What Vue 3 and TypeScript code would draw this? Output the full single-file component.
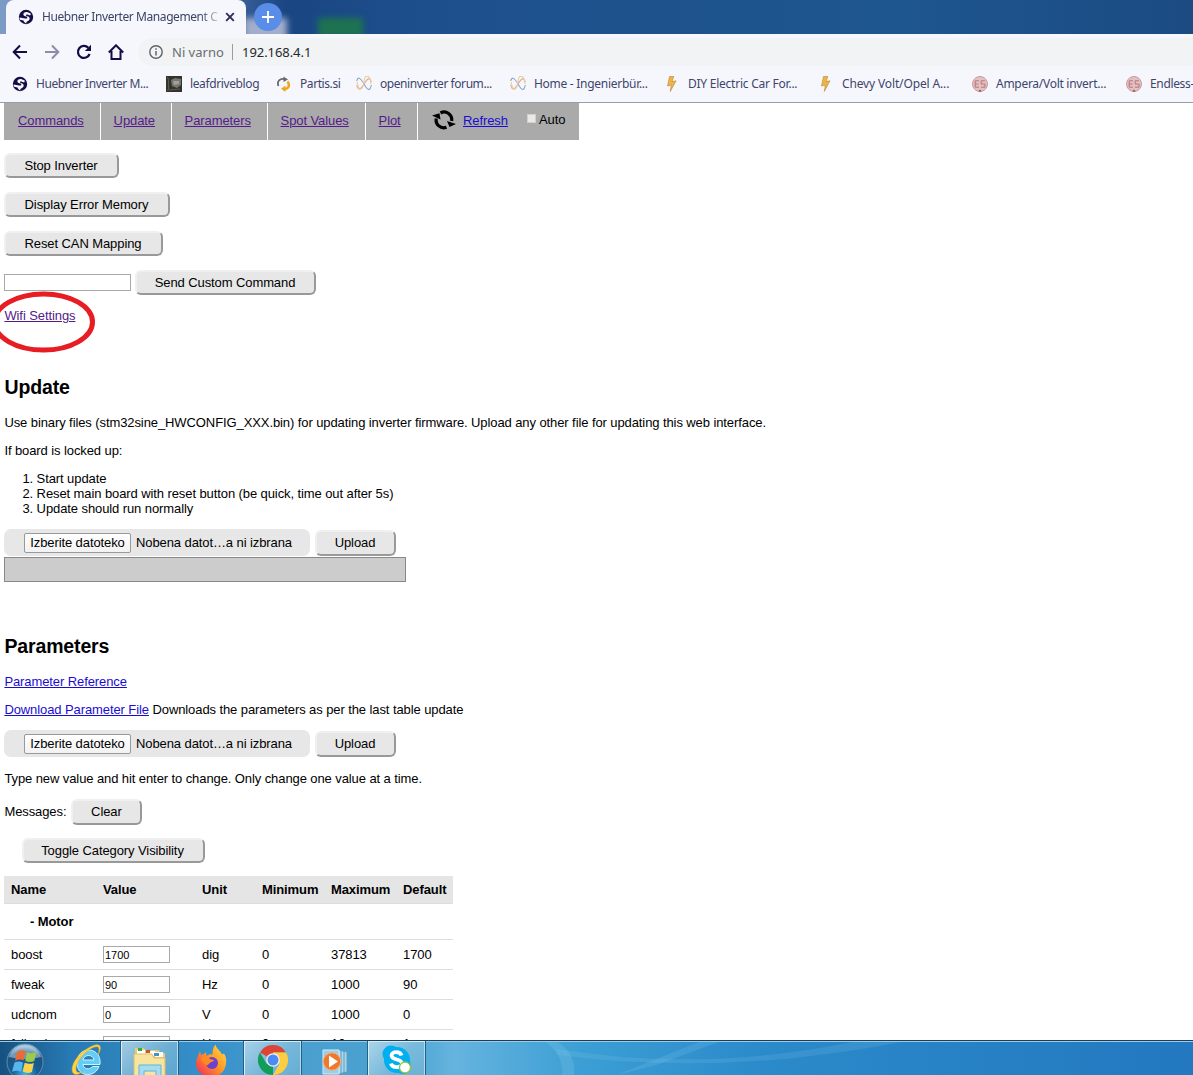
<script setup lang="ts">
interface Bookmark { label: string; icon: string; width: number; spacing: number }
interface Row { name: string; value: string; unit: string; min: string; max: string; def: string }

const bookmarks: Bookmark[] = [
  { label: 'Huebner Inverter M...', icon: 'globe', width: 154, spacing: -0.45 },
  { label: 'leafdriveblog', icon: 'photo', width: 110, spacing: -0.38 },
  { label: 'Partis.si', icon: 'partis', width: 80, spacing: -0.42 },
  { label: 'openinverter forum...', icon: 'wave', width: 154, spacing: -0.44 },
  { label: 'Home - Ingenierbür...', icon: 'wave', width: 154, spacing: -0.28 },
  { label: 'DIY Electric Car For...', icon: 'bolt', width: 154, spacing: -0.24 },
  { label: 'Chevy Volt/Opel A...', icon: 'bolt', width: 154, spacing: -0.14 },
  { label: 'Ampera/Volt invert...', icon: 'es', width: 154, spacing: -0.28 },
  { label: 'Endless-', icon: 'es', width: 154, spacing: -0.35 },
]

const tabs = [
  { label: 'Commands', width: 96 },
  { label: 'Update', width: 70 },
  { label: 'Parameters', width: 95 },
  { label: 'Spot Values', width: 97 },
  { label: 'Plot', width: 51 },
]

const commands = [
  { label: 'Stop Inverter', width: 115 },
  { label: 'Display Error Memory', width: 166 },
  { label: 'Reset CAN Mapping', width: 159 },
]

const rows: Row[] = [
  { name: 'boost', value: '1700', unit: 'dig', min: '0', max: '37813', def: '1700' },
  { name: 'fweak', value: '90', unit: 'Hz', min: '0', max: '1000', def: '90' },
  { name: 'udcnom', value: '0', unit: 'V', min: '0', max: '1000', def: '0' },
  { name: 'fslipmin', value: '1', unit: 'Hz', min: '0', max: '10', def: '1' },
]
</script>

<template>
  <div class="screen">
    <header class="browser">
      <div class="titlebar">
        <div class="tab">
          <svg class="fav" viewBox="0 0 16 16"><circle cx="8" cy="8" r="7.2" fill="#150c46" /><path d="M13 4.800L9.800 3.200C7 2.600 5 4 5.400 5.800c.4 1.600 3.500 1.300 3.900 2.600.3 1.200-1.200 1.300-2.200 1.100L1.500 8.600c0 .8.200 1.400.5 2.100l3.500.7c.5 1.400 1.300 2.500 3 3.100-.6-1.600.3-2 1.500-2.500 1.600-.7 2.200-2.600 1.200-3.800C10.200 7.100 8 7.300 7.900 6.300c-.1-.8 1.200-.9 2.200-.6l2 .7z" fill="#f6f7fc" /></svg>
          <span class="tab-title">Huebner Inverter Management C</span>
          <svg class="close" viewBox="0 0 10 10"><path d="M1.200 1.200l7.600 7.600M8.800 1.200L1.200 8.800" stroke="#2c2d5c" stroke-width="1.900" /></svg>
        </div>
        <div class="plus"><svg viewBox="0 0 12 12"><path d="M6 0v12M0 6h12" stroke="#fff" stroke-width="1.800" /></svg></div>
        <i class="smudge pale"></i><i class="smudge green"></i>
      </div>
      <div class="toolbar">
        <svg class="tool" viewBox="0 0 16 16"><path d="M15 8H2M8 1.500L1.700 8 8 14.500" fill="none" stroke="#150c46" stroke-width="2" /></svg>
        <svg class="tool" viewBox="0 0 16 16"><path d="M1 8h13M8 1.500L14.300 8 8 14.500" fill="none" stroke="#8f8ba8" stroke-width="2" /></svg>
        <svg class="tool" viewBox="0 0 16 16"><path d="M13.600 10A6 6 0 1 1 12.300 3.800" fill="none" stroke="#150c46" stroke-width="2.200" /><path d="M15 .8V7H8.800z" fill="#150c46" /></svg>
        <svg class="tool" viewBox="0 0 16 16"><path d="M.8 8.500L8 1.300l7.200 7.200M3.500 7v8h9V7" fill="none" stroke="#150c46" stroke-width="2" /></svg>
        <div class="address">
          <svg viewBox="0 0 14 14"><circle cx="7" cy="7" r="6.200" fill="none" stroke="#5f6368" stroke-width="1.400" /><path d="M7 6v4.500M7 3.300v1.500" stroke="#5f6368" stroke-width="1.500" /></svg>
          <span class="unsafe">Ni varno</span><i></i><span class="url">192.168.4.1</span>
        </div>
      </div>
      <nav class="bookmarks">
        <div v-for="b in bookmarks" :key="b.label" class="bookmark" :style="{ width: b.width + 'px' }">
          <svg v-if="b.icon === 'globe'" viewBox="0 0 16 16"><circle cx="8" cy="8" r="7.2" fill="#150c46" /><path d="M13 4.800L9.800 3.200C7 2.600 5 4 5.400 5.800c.4 1.600 3.500 1.300 3.900 2.600.3 1.200-1.200 1.300-2.200 1.100L1.500 8.600c0 .8.200 1.400.5 2.100l3.500.7c.5 1.400 1.300 2.500 3 3.100-.6-1.600.3-2 1.500-2.500 1.600-.7 2.200-2.600 1.200-3.800C10.200 7.100 8 7.300 7.900 6.300c-.1-.8 1.200-.9 2.200-.6l2 .7z" fill="#f6f7fc" /></svg>
          <svg v-else-if="b.icon === 'photo'" viewBox="0 0 16 16"><path d="M0 0h16v16H0z" fill="#33322f" /><path d="M5 4l4-2 6 1v6l-4 3-5-2z" fill="#77776f" /><path d="M7 5h6v3l-5 1z" fill="#a0a19a" /><path d="M1.500 1l1 3v9l-1 2M3 14l11-1" stroke="#605a4a" fill="none" /></svg>
          <svg v-else-if="b.icon === 'partis'" viewBox="0 0 16 16"><path d="M2.500 10C.5 5.500 4 2 8.500 3" fill="none" stroke="#666b70" stroke-width="1.800" /><path d="M7.500 .5L12 3.500l-4.500 2.500z" fill="#666b70" /><path d="M11.500 5.500c3 4 1 7.500-3.500 7.500" fill="none" stroke="#eda51e" stroke-width="2.400" /><path d="M9.500 9.500V16L5 12.800z" fill="#eda51e" /></svg>
          <svg v-else-if="b.icon === 'wave'" viewBox="0 0 16 16" fill="none" stroke-width="1.100"><path d="M.7 5C2 0 4.500 2 8 8s6 8 7.300 1" stroke="#8aa6c8" /><path d="M.7 9C2 15 4.500 14 8 8s6-7 7.300-2" stroke="#e0a898" /><path d="M1 6c2 11 6 8 7-.5S14-1 15 8" stroke="#e6cf94" /></svg>
          <svg v-else-if="b.icon === 'bolt'" viewBox="0 0 16 16"><path d="M5.500 .5h4.300L8 5.600l4-.8L6.300 15.500 7.300 9 3.500 10z" fill="#eeb546" stroke="#b88430" stroke-width=".6" /></svg>
          <svg v-else viewBox="0 0 16 16"><circle cx="8" cy="8" r="7.500" fill="#e3c1c3" stroke="#c99a9d" /><path d="M7 4.800H3.200v6.400H7M3.200 8h3.300M13 4.800H9.200V8H13v3.200H9" fill="none" stroke="#b77679" stroke-width="1" /><path d="M6.500 15.500L8 13.500l1.500 2z" fill="#843e44" /></svg>
          <span :style="{ letterSpacing: b.spacing + 'px' }">{{ b.label }}</span>
        </div>
      </nav>
    </header>

    <main class="page">
      <nav class="menu">
        <div v-for="t in tabs" :key="t.label" class="cell" :style="{ width: t.width + 'px' }"><a>{{ t.label }}</a></div>
        <div class="cell refresh">
          <svg viewBox="0 0 24 20"><path d="M4.300 8.500A7.600 7.600 0 0 0 14.500 17.200M8.500 3A7.600 7.600 0 0 1 19.600 11" fill="none" stroke="#000" stroke-width="3.200" /><path d="M0 5.500l7.500-2.300L8.500 9.500zM24 14l-6.500 3-2.500-6z" fill="#000" /></svg>
          <a class="blue">Refresh</a><i class="check"></i><span class="auto">Auto</span>
        </div>
      </nav>

      <section class="commands">
        <div v-for="c in commands" :key="c.label" class="command"><button :style="{ width: c.width + 'px' }">{{ c.label }}</button></div>
        <div class="command custom"><input class="custom-input" /><button class="send">Send Custom Command</button></div>
        <div class="wifi"><a>Wifi Settings</a>
          <svg class="ring" viewBox="0 0 100 62"><ellipse cx="45.500" cy="31" rx="49" ry="28" fill="none" stroke="#e81c23" stroke-width="5" /></svg>
        </div>
      </section>

      <h2>Update</h2>
      <p>Use binary files (stm32sine_HWCONFIG_XXX.bin) for updating inverter firmware. Upload any other file for updating this web interface.</p>
      <p>If board is locked up:</p>
      <ol><li>Start update</li><li>Reset main board with reset button (be quick, time out after 5s)</li><li>Update should run normally</li></ol>
      <div class="upload"><div class="file"><span class="choose">Izberite datoteko</span><span>Nobena datot…a ni izbrana</span></div><button>Upload</button></div>
      <div class="progress"></div>

      <h2 class="params">Parameters</h2>
      <p><a class="blue">Parameter Reference</a></p>
      <p><a class="blue">Download Parameter File</a> Downloads the parameters as per the last table update</p>
      <div class="upload"><div class="file"><span class="choose">Izberite datoteko</span><span>Nobena datot…a ni izbrana</span></div><button>Upload</button></div>
      <p class="hint">Type new value and hit enter to change. Only change one value at a time.</p>
      <div class="messages"><span>Messages:</span><button>Clear</button></div>
      <button class="toggle">Toggle Category Visibility</button>
      <div class="table">
        <div class="tr head"><b>Name</b><b>Value</b><b>Unit</b><b>Minimum</b><b>Maximum</b><b>Default</b></div>
        <div class="category">- Motor</div>
        <div v-for="r in rows" :key="r.name" class="tr">
          <span>{{ r.name }}</span><span><input :value="r.value" /></span><span>{{ r.unit }}</span><span>{{ r.min }}</span><span>{{ r.max }}</span><span>{{ r.def }}</span>
        </div>
      </div>
    </main>

    <footer class="taskbar">
      <div class="task start">
        <svg width="38" height="36" viewBox="0 0 38 36"><defs><radialGradient id="orb" cx=".5" cy=".85" r=".8"><stop offset="0" stop-color="#39b8e8" /><stop offset=".45" stop-color="#155c94" /><stop offset=".8" stop-color="#20527e" /><stop offset="1" stop-color="#9fc4dc" /></radialGradient></defs><circle cx="19" cy="20" r="18" fill="url(#orb)" stroke="#5d8fb2" /><path d="M3 15a17 17 0 0 1 32 0q-16 4-32 0" fill="#d8ebf5" opacity=".45" /><path d="M11.500 9.500q4-2.500 8 0l-2 9q-4-2-8.500.500z" fill="#ef6a32" /><path d="M21 10.200q4 2 9.500-.2l-2.200 9q-4.500 2-9 0z" fill="#9bcb4b" /><path d="M8.500 20.500q4.500-2 8.500.2l-2 9q-4-2-9 0z" fill="#59b5ed" /><path d="M18.700 20.800q4.500 2 9.200.2l-2 9q-4.500 2-9.200-.5z" fill="#fbd34b" /></svg>
      </div>
      <div class="task ie">
        <svg width="36" height="36" viewBox="0 0 36 36"><path d="M31 23.500H14c.3 4.500 6.500 6 9.500 2H30c-2 5.500-6.500 8-11.500 8C11.500 33.500 8 28 8 22 8 14 13 9 19.500 9 27.500 9 32 15.500 31 23.500zM14 19h11c-.5-6-10-6-11 0z" fill="#62cdf5" stroke="#d1f1fc" stroke-width="1" /><path d="M29 14C34 5 31 1 22 5.500 10 11.500 1 23.500 3.500 31c1.500 4 7 2.500 10.500-.5-4.500 2-7.500 1-7-3.500C8 17 23.500 3.500 29 6c1.500.7 1.200 4 0 8z" fill="#ffd33f" stroke="#e9a92c" stroke-width=".5" /></svg>
      </div>
      <div class="task active explorer">
        <svg width="34" height="35" viewBox="0 0 34 35"><path d="M2 5h9l2 3h5V7h8l1 3h5v25H2z" fill="#e8cb72" /><path d="M4 7h8v5H4zM13 8h9v5h-9zM22 9h8v5h-8z" fill="#fff" /><path d="M5 5h4v3H5z" fill="#33a952" /><path d="M13 7h4v3h-4z" fill="#d65030" /><path d="M21 10h5v3h-5z" fill="#3c95cf" /><path d="M1 11h18l2 4h11v20H1z" fill="#f7e4a0" stroke="#dfbd62" /><path d="M6 35V22h22v13h-5v-7H11v7z" fill="#a6dcef" stroke="#61b4d9" /></svg>
      </div>
      <div class="task firefox">
        <svg width="32" height="34" viewBox="0 0 32 34"><defs><linearGradient id="fox" x1="1" y1="0" x2="0" y2="1"><stop offset="0" stop-color="#ffe24a" /><stop offset=".45" stop-color="#ff9a25" /><stop offset="1" stop-color="#f4235c" /></linearGradient></defs><path d="M5 7l1 4q2-1 3-1l2-2 .5 4c2-1.500 4-2 6-1.500 0-4 .5-7 3-10 .5 4 5 6 6.500 10l2-1c2 3 2.500 6 2 10-.8 8-6.500 13-14.500 13S1 27.500 1 20C1 15 3 12 5 7z" fill="url(#fox)" /><circle cx="17" cy="19" r="6" fill="#6a42ce" /><path d="M6 14c3-2.500 7-2 9 1 2 1 4 0 4 2-3 1-5 2-6 4-3 0-6-2-7-7z" fill="#ff8a23" /></svg>
      </div>
      <div class="task active chrome">
        <svg width="30" height="30" viewBox="0 0 30 30"><path d="M15 15L2 7.500A15 15 0 0 1 28 7.500H15z" fill="#db4437" /><path d="M15 15v15A15 15 0 0 1 2 7.500L8.500 18.700z" fill="#109d58" /><path d="M15 7.500h13A15 15 0 0 1 15 30l6.500-11.200z" fill="#ffcd40" /><circle cx="15" cy="15" r="6.800" fill="#f1f1f1" /><circle cx="15" cy="15" r="5.500" fill="#4c8bf5" /></svg>
      </div>
      <div class="task media">
        <svg width="30" height="28" viewBox="0 0 30 28"><path d="M17 2l9 2v20l-9 2z" fill="#a9d6ec" stroke="#5b9ec2" /><path d="M20 3v22M23 3v22" stroke="#5b9ec2" /><path d="M2 2h16v24H2z" fill="#9bcee7" stroke="#d2ecf6" /><circle cx="11" cy="13.500" r="8.700" fill="#f0782a" stroke="#f7b078" /><path d="M8 7.500l9 6-9 6z" fill="#fff" /></svg>
      </div>
      <div class="task active skype">
        <svg width="30" height="32" viewBox="0 0 30 32"><circle cx="9" cy="9" r="8.500" fill="#00aff0" /><circle cx="15" cy="15" r="13" fill="#00aff0" /><circle cx="21" cy="21" r="8" fill="#00aff0" /><path d="M19.500 10.500c-1-4.500-10-4.500-10 0 0 5 10.500 3 10.500 8 0 4.800-10 4.800-11 0" fill="none" stroke="#fff" stroke-width="3.800" /><circle cx="23" cy="22.500" r="5.500" fill="#fff" stroke="#8ac43f" stroke-width="1.300" /></svg>
      </div>
      <svg class="streaks" viewBox="0 0 766 34" preserveAspectRatio="none"><path d="M118 0q20 14 18 34h12Q150 12 130 0z" fill="#8fd0f0" opacity=".2" /><path d="M190 34L275 0h20L230 24z" fill="#9dd4f2" opacity=".16" /><path d="M130 8q150 24 300-8h50Q300 36 132 14z" fill="#9dd4f2" opacity=".14" /></svg>
    </footer>
  </div>
</template>

<style>
body { margin: 0; overflow: hidden; }
</style>

<style scoped>
* { box-sizing: border-box; }
.screen { width: 1193px; height: 1075px; display: flex; flex-direction: column; overflow: hidden; background: #fff; font: 13px/15px "Liberation Sans", Arial, sans-serif; letter-spacing: -.093px; color: #000; }
svg { display: block; flex: none; }
.browser { height: 103px; flex: none; background: #f6f7fd; border-bottom: 1px solid #9b9da4; font-family: "Noto Sans", "Open Sans", sans-serif; }
.titlebar { height: 34px; display: flex; position: relative; background: linear-gradient(90deg, #7d9bc7 0, #41669f 19%, #1a4683 24%, #1d4f8c 35%, #1e568f 75%, #1b4b82 100%); }
.tab { position: relative; z-index: 2; width: 240px; height: 34px; margin-left: 6px; padding: 0 11px 0 12px; display: flex; align-items: center; background: #f6f7fd; border-radius: 8px 8px 0 0; }
.fav { width: 16px; height: 16px; margin-right: 8px; }
.tab-title { width: 176px; margin-top: -1px; white-space: nowrap; font-size: 12px; letter-spacing: -.42px; color: #3b4266; -webkit-mask-image: linear-gradient(90deg, #000 158px, transparent 182px); mask-image: linear-gradient(90deg, #000 158px, transparent 182px); }
.close { width: 10px; height: 10px; margin-left: 7px; }
.plus { z-index: 2; width: 28px; height: 28px; margin: 3px 0 0 8px; display: grid; place-items: center; border-radius: 50%; background: #5a8de8; }
.plus svg { width: 12px; }
.smudge { position: absolute; filter: blur(3px); }
.pale { left: 244px; top: 18px; width: 43px; height: 22px; background: #a2aecb; clip-path: inset(-8px -8px 6px -8px); }
.green { left: 318px; top: 18px; width: 45px; height: 20px; background: #1d7350; clip-path: inset(-8px -8px 4px -8px); }
.toolbar { height: 36px; display: flex; align-items: center; padding-left: 12px; gap: 16px; }
.tool { width: 16px; height: 16px; }
.address { flex: 1; height: 28px; margin-left: -2px; padding-left: 11px; display: flex; align-items: center; border-radius: 14px 0 0 14px; background: #f1f3f4; font-size: 13px; white-space: nowrap; }
.address svg { width: 14px; }
.address i { width: 1px; height: 16px; margin: 0 9px 0 8px; background: #999ca0; }
.unsafe { width: 52px; margin-left: 9px; color: #6a6d72; letter-spacing: 0; }
.url { color: #26282c; letter-spacing: -.06px; }
.bookmarks { height: 28px; display: flex; align-items: center; padding-left: 12px; overflow: hidden; }
.bookmark { flex: none; display: flex; gap: 8px; align-items: center; white-space: nowrap; font-size: 12px; color: #3e456b; }
.bookmark svg { width: 16px; height: 16px; }
.bookmark span { margin-top: -1px; }
.page { flex: none; height: 937px; overflow: hidden; padding-left: 4px; }
a { color: #551a8b; text-decoration: underline; }
a.blue { color: #1a0dd0; }
.menu { display: flex; gap: 1px; height: 37px; }
.cell { background: #aaa; padding: 10px 0 0 12.6px; }
.cell:first-child { padding-left: 14px; }
.refresh { width: 161px; display: flex; padding: 7px 0 0 14px; }
.refresh svg { width: 24px; height: 20px; }
.refresh a { margin: 3px 0 0 7px; width: 64px; }
.check { width: 9px; height: 9px; margin-top: 4px; background: #e9e9e9; border: 1px solid #d0d0d0; }
.auto { margin: 2px 0 0 3px; }
.commands { padding-top: 13px; height: 236px; }
.command { height: 39px; display: flex; align-items: flex-start; }
button { width: 81px; height: 25px; padding: 0 1px 1px 0; border: 2px solid; border-color: #f0f0f0 #999 #999 #f0f0f0; border-radius: 6px; background: #e7e7e7; color: #000; font: inherit; letter-spacing: inherit; white-space: nowrap; }
.custom-input { width: 127px; height: 17px; margin-top: 4px; margin-right: 4px; border: 1px solid #a9a9a9; padding: 0; }
.send { width: 181px; }
.wifi { position: relative; height: 15px; margin-top: -1px; padding-left: .4px; }
.ring { position: absolute; left: -6px; top: -17px; width: 100px; height: 62px; }
h2 { margin: 0 0 17px .5px; font-size: 19.5px; line-height: 22px; font-weight: bold; letter-spacing: -.15px; }
p { margin: 0 0 13px .4px; height: 15px; white-space: nowrap; }
ol { margin: 0 0 13px; padding-left: 32.6px; }
.upload { display: flex; height: 28px; gap: 5px; align-items: flex-start; }
.upload button { margin-top: 1px; height: 26px; }
.file { width: 306px; height: 27px; padding-left: 20px; display: flex; gap: 5px; align-items: center; border-radius: 7px; background: #e7e7e7; white-space: nowrap; }
.choose { width: 107px; height: 20px; border: 1px solid #999; border-radius: 2px; background: linear-gradient(#fff, #f2f2f2); text-align: center; line-height: 18px; }
.progress { width: 402px; height: 25px; border: 1px solid #888; background: #ccc; }
h2.params { margin-top: 53px; }
p.hint { margin-top: 13px; margin-bottom: 12px; }
.messages { height: 27px; display: flex; gap: 5px; align-items: center; padding-left: .4px; }
.messages button { width: 71px; height: 26px; }
.toggle { display: block; margin: 13px 0 13px 18px; width: 183px; height: 25px; padding-right: 2px; }
.table { width: 449px; }
.tr { height: 30px; display: grid; grid-template-columns: 92px 99px 60px 69px 72px 50px; align-items: center; padding-left: 7px; border-bottom: 1px solid #ddd; }
.tr:last-child span:not(:nth-child(2)) { margin-bottom: 2px; }
.tr.head { height: 28px; background: #e5e5e5; }
.category { height: 36px; padding: 10px 0 0 26px; border-bottom: 1px solid #ddd; font-weight: bold; }
.tr input { display: block; width: 67px; height: 17px; padding: 1px; border: 1px solid #a9a9a9; font: 11px "Liberation Sans", Arial, sans-serif; }
.taskbar { position: relative; height: 35px; flex: none; display: flex; overflow: hidden; border-top: 1px solid #17405e; box-shadow: inset 0 1px #9ecae4; background: linear-gradient(90deg, #155181 0, #287bb4 6%, #2d83bb 10%, #368fca 17%, #4a9fcf 25%, #4aa3d2 34%, #65b4de 38%, #3b9ed4 49%, #2b8aca 64%, #2378bf 100%); }
.task { height: 35px; flex: none; display: flex; justify-content: center; align-items: flex-start; }
.start { width: 50px; padding-top: 1px; }
.ie { width: 70px; padding-left: 4px; }
.active { width: 59px; border: 1px solid #246083; border-width: 0 1px; box-shadow: inset 1px 1px #d8edf8, inset -1px 0 #b4dbed; background: linear-gradient(135deg, #d0e7f2bb, #91c7e0a0 55%, #78b6d699); }
.explorer svg { margin-top: 2px; }
.firefox { width: 64px; padding-top: 3px; }
.chrome { padding-top: 4px; }
.media { width: 65px; padding: 7px 0 0 3px; }
.skype { padding-top: 4px; }
.streaks { flex: 1; height: 34px; min-width: 0; }
</style>
